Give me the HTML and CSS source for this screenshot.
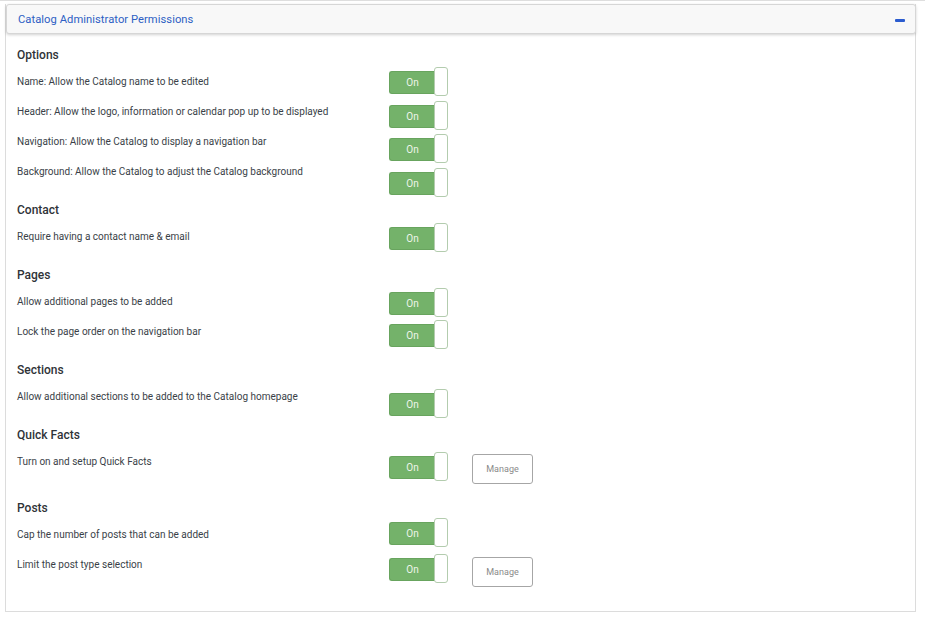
FILE: index.html
```html
<!DOCTYPE html>
<html lang="en">

<head>
    <meta charset="utf-8">
    <title>Catalog Administrator Permissions</title>
    <meta name="viewport" content="width=device-width, initial-scale=1">
    <link rel="stylesheet" href="styles.css">
</head>

<body>
    <div class="panel">
        <div class="panel-header">
            <span class="panel-title">Catalog Administrator Permissions</span>
            <span class="collapse-icon"></span>
        </div>

        <div class="panel-body">
            <h3 class="group-title first">Options</h3>
            <div class="row">
                <span class="label">Name: Allow the Catalog name to be edited</span>
                <div class="toggle nudge-2"><span class="toggle-on">On</span><span class="knob"></span></div>
            </div>
            <div class="row">
                <span class="label">Header: Allow the logo, information or calendar pop up to be displayed</span>
                <div class="toggle nudge-6"><span class="toggle-on">On</span><span class="knob"></span></div>
            </div>
            <div class="row">
                <span class="label">Navigation: Allow the Catalog to display a navigation bar</span>
                <div class="toggle nudge-9"><span class="toggle-on">On</span><span class="knob"></span></div>
            </div>
            <div class="row">
                <span class="label">Background: Allow the Catalog to adjust the Catalog background</span>
                <div class="toggle nudge-13"><span class="toggle-on">On</span><span class="knob"></span></div>
            </div>

            <h3 class="group-title">Contact</h3>
            <div class="row">
                <span class="label">Require having a contact name &amp; email</span>
                <div class="toggle nudge-3"><span class="toggle-on">On</span><span class="knob"></span></div>
            </div>

            <h3 class="group-title">Pages</h3>
            <div class="row">
                <span class="label">Allow additional pages to be added</span>
                <div class="toggle nudge-3"><span class="toggle-on">On</span><span class="knob"></span></div>
            </div>
            <div class="row">
                <span class="label">Lock the page order on the navigation bar</span>
                <div class="toggle nudge-5"><span class="toggle-on">On</span><span class="knob"></span></div>
            </div>

            <h3 class="group-title">Sections</h3>
            <div class="row">
                <span class="label">Allow additional sections to be added to the Catalog homepage</span>
                <div class="toggle nudge-9"><span class="toggle-on">On</span><span class="knob"></span></div>
            </div>

            <h3 class="group-title">Quick Facts</h3>
            <div class="row tall">
                <span class="label">Turn on and setup Quick Facts</span>
                <div class="toggle nudge-7"><span class="toggle-on">On</span><span class="knob"></span></div>
                <button class="manage-btn">Manage</button>
            </div>

            <h3 class="group-title">Posts</h3>
            <div class="row">
                <span class="label">Cap the number of posts that can be added</span>
                <div class="toggle nudge-0"><span class="toggle-on">On</span><span class="knob"></span></div>
            </div>
            <div class="row tall">
                <span class="label">Limit the post type selection</span>
                <div class="toggle nudge-6"><span class="toggle-on">On</span><span class="knob"></span></div>
                <button class="manage-btn">Manage</button>
            </div>
        </div>
    </div>
</body>

</html>
```

FILE: styles.css
```css
body {
    font-family: Roboto, "Liberation Sans", Arial, sans-serif;
    margin: 0;
    padding: 0;
    background-color: #fff;
    color: #333;
    border-top: 1px solid #dedede;
}

.panel {
    margin: 3px 9px 0 5px;
    border: 1px solid #dcdcdc;
    border-top: none;
    height: 608px;
    box-sizing: border-box;
}

.panel-header {
    display: flex;
    align-items: center;
    justify-content: space-between;
    height: 30px;
    margin: 0 -1px 0 0;
    padding: 0 10px 0 11px;
    background: #f8f8f8;
    border: 1px solid #d6d6d6;
    border-radius: 3px;
    box-shadow: 0 1px 3px rgba(0, 0, 0, 0.18);
    box-sizing: border-box;
}

.panel-title {
    color: #2d5fc4;
    font-size: 11.2px;
    letter-spacing: 0.05px;
}

.collapse-icon {
    width: 10px;
    height: 3px;
    background: #2b5ccf;
    border-radius: 1px;
    margin-top: 2px;
}

.panel-body {
    padding: 8px 11px 24px 11px;
}

.group-title {
    margin: 12px 0 -3px 0;
    font-size: 12px;
    font-weight: 500;
    line-height: 26px;
    color: #2f3338;
}

.group-title.first {
    margin-top: 0;
}

.row {
    display: flex;
    align-items: flex-start;
    height: 30px;
}

.row.tall {
    height: 38px;
}

.label {
    width: 372px;
    height: 30px;
    flex: none;
    font-size: 10px;
    line-height: 34px;
    color: #3a3f48;
}

.toggle {
    display: flex;
    align-items: flex-start;
    height: 29px;
    flex: none;
}

.toggle-on {
    width: 46px;
    height: 23px;
    margin-top: 4px;
    background: #74b26a;
    border: 1px solid #68a45e;
    border-right: none;
    border-radius: 3px 0 0 3px;
    box-sizing: border-box;
    color: #eef5ec;
    font-size: 10px;
    line-height: 21px;
    text-align: center;
}

.knob {
    width: 14px;
    height: 29px;
    margin-left: -1px;
    background: #fff;
    border: 1px solid #b3ccae;
    border-radius: 3px;
    box-sizing: border-box;
}

.nudge-0 { margin-top: 0; }
.nudge-2 { margin-top: 2px; }
.nudge-3 { margin-top: 3px; }
.nudge-5 { margin-top: 5px; }
.nudge-6 { margin-top: 6px; }
.nudge-7 { margin-top: 7px; }
.nudge-9 { margin-top: 9px; }
.nudge-13 { margin-top: 13px; }

.manage-btn {
    width: 61px;
    height: 30px;
    margin: 9px 0 0 24px;
    padding: 0;
    background: #fff;
    border: 1px solid #a6a6a6;
    border-radius: 3px;
    color: #8a8a8a;
    font-family: Roboto, "Liberation Sans", Arial, sans-serif;
    font-size: 9px;
}
```
